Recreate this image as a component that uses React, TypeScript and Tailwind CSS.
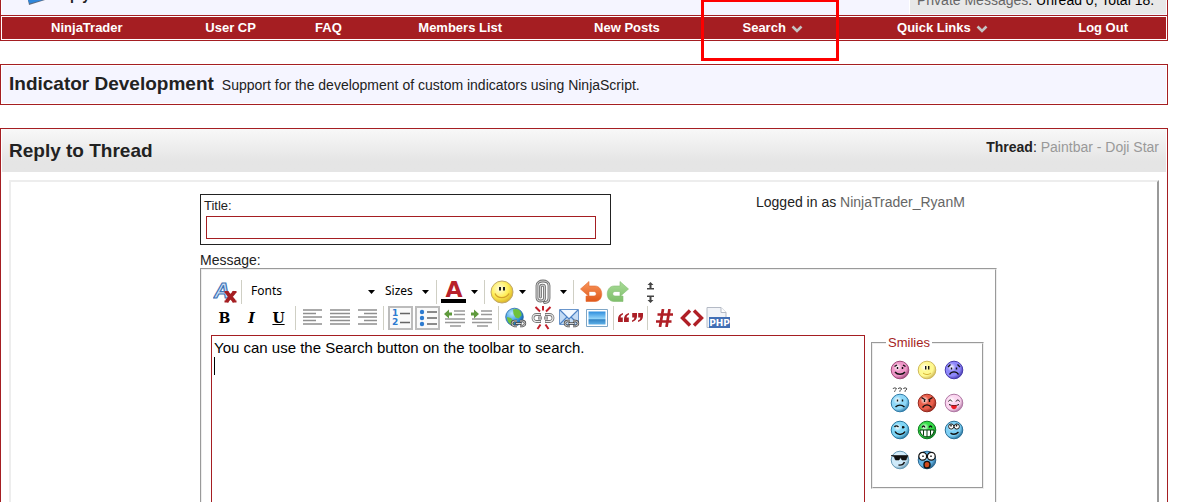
import type { ReactNode } from "react";

const NAV = [
  { label: "NinjaTrader" },
  { label: "User CP" },
  { label: "FAQ" },
  { label: "Members List" },
  { label: "New Posts" },
  { label: "Search", menu: true, marked: true },
  { label: "Quick Links", menu: true },
  { label: "Log Out" },
];

function Chevron() {
  return (
    <svg width="12" height="8" viewBox="0 0 12 8" className="mt-px" aria-hidden="true">
      <path d="M1.5 1.5 6 6l4.500-4.500" fill="none" stroke="#c4c4c4" strokeWidth="2.600" />
    </svg>
  );
}

function NavBar() {
  return (
    <nav className="shrink-0 border border-[#a51e22] p-px">
      <ul className="grid h-[22px] grid-cols-[170fr_118fr_78fr_186fr_148fr_144fr_196fr_126fr] bg-[#a51e22] text-[13px] font-bold text-white">
        {NAV.map((item) => (
          <li key={item.label} className="relative flex items-center justify-center pt-px">
            <a href="#" className="flex items-center gap-[5px]">
              {item.label}
              {item.menu && <Chevron />}
            </a>
            {item.marked && (
              <span className="pointer-events-none absolute -top-[17px] left-0 z-10 h-[61px] w-[138px] border-[3px] border-t-2 border-[#fe0000]" />
            )}
          </li>
        ))}
      </ul>
    </nav>
  );
}

function TopStrip() {
  return (
    <div className="h-[15px] shrink-0 border-x border-[#a51e22] bg-white px-px">
      <div className="flex h-full items-start justify-between overflow-hidden bg-[#f5f5ff]">
        <div className="flex h-full items-start pl-[26px]">
          <svg width="18" height="6" viewBox="0 0 18 6" aria-hidden="true">
            <path d="M0 0h17L1 5z" fill="#5d6b80" />
            <path d="M0 0h15L1.500 3.500z" fill="#2f87dc" />
          </svg>
          <div className="flex h-[3px] items-end pl-[6px] text-sm font-bold leading-4">Reply to Thread</div>
        </div>
        <div className="flex h-[14px] w-[257px] items-end border-l border-white bg-[#e8e8e8] px-[7px] pb-[6px] text-sm leading-4 text-black">
          <p>
            <a href="#" className="text-[#666]">Private Messages</a>: Unread 0, Total 18.
          </p>
        </div>
      </div>
    </div>
  );
}

type ToolProps = { label: string; children: ReactNode };

function Tool({ label, children }: ToolProps) {
  return (
    <button type="button" aria-label={label} className="flex h-[26px] w-[27px] shrink-0 items-center justify-center">
      {children}
    </button>
  );
}

function PressedTool({ label, children }: ToolProps) {
  return (
    <button
      type="button"
      aria-label={label}
      aria-pressed="true"
      className="mx-px flex h-6 w-[25px] shrink-0 items-center justify-center border-2 border-[#bcbcbc] bg-[#fafafa]"
    >
      {children}
    </button>
  );
}

function Caret() {
  return (
    <svg width="7" height="4" viewBox="0 0 7 4" aria-hidden="true">
      <path d="M0 0h7L3.500 4z" fill="#000" />
    </svg>
  );
}

function MenuArrow({ label }: { label: string }) {
  return (
    <button type="button" aria-label={label} className="flex h-[26px] w-[14px] shrink-0 items-center justify-center">
      <Caret />
    </button>
  );
}

function Separator() {
  return <span className="mx-[3px] h-6 w-px shrink-0 bg-[#cfcfc4]" />;
}

function Picker({ label, className }: { label: string; className: string }) {
  return (
    <div className={`relative shrink-0 ${className}`}>
      <select
        aria-label={label}
        className="h-[26px] w-full appearance-none bg-transparent pb-[2px] pl-[6px] font-['Noto_Sans',sans-serif] text-xs text-black"
      >
        <option>{label}</option>
      </select>
      <span className="pointer-events-none absolute inset-y-0 right-[4px] flex items-center">
        <Caret />
      </span>
    </div>
  );
}

function ClearIcon() {
  return (
    <svg width="24" height="24" viewBox="0 0 24 24" aria-hidden="true">
      <text x="1" y="18" fontFamily="Liberation Sans, sans-serif" fontSize="22" fontStyle="italic" fontWeight="bold" fill="#c9def5" stroke="#3f73b5" strokeWidth="1.200">A</text>
      <path d="m13.500 12 8 9.500m0-9.500-8 9.500" stroke="#a51e22" strokeWidth="3.600" />
      <path d="M11.500 12h4m4 0h4m-12 9.500h4m4 0h4" stroke="#a51e22" strokeWidth="2" />
    </svg>
  );
}

function ColorIcon() {
  return (
    <svg width="26" height="24" viewBox="0 0 26 24" aria-hidden="true">
      <text x="13" y="17" textAnchor="middle" fontFamily="DejaVu Sans, sans-serif" fontSize="22" fontWeight="bold" fill="#b8212b">A</text>
      <path d="M0 19h25v4H0z" fill="#000" />
    </svg>
  );
}

function SmileIcon() {
  return (
    <svg width="24" height="24" viewBox="0 0 24 24" aria-hidden="true">
      <radialGradient id="big-smile" cx="40%" cy="35%" r="65%">
        <stop offset="0" stopColor="#fffde0" />
        <stop offset=".6" stopColor="#ffee55" />
        <stop offset="1" stopColor="#dcb72a" />
      </radialGradient>
      <circle cx="12" cy="12" r="11" fill="url(#big-smile)" stroke="#c0a76a" />
      <path d="M10 7v3.500m4-3.500v3.500" stroke="#222" strokeWidth="2" />
      <path d="M5 13.500c2.500 5.500 11 5.500 14 0" fill="none" stroke="#d3a02c" strokeWidth="1.300" />
    </svg>
  );
}

function ClipIcon() {
  return (
    <svg width="18" height="26" viewBox="0 0 18 26" fill="none" aria-hidden="true">
      <g strokeLinecap="round">
        <path d="M6.500 18V8c0-2.500 4-2.500 4 0v11c0 4-7.500 4-7.500 0V6.500C3 .500 15 .500 15 6.500V19c0 3-2 4.500-4.500 4.500" stroke="#6a6a6a" strokeWidth="2.800" />
        <path d="M6.500 18V8c0-2.500 4-2.500 4 0v11c0 4-7.500 4-7.500 0V6.500C3 .500 15 .500 15 6.500V19c0 3-2 4.500-4.500 4.500" stroke="#cfcfcf" strokeWidth="1.200" />
      </g>
    </svg>
  );
}

const TURN = "M.500 8 9 .500v4.500H15c8.500 0 9.500 15.500 0 15.500H6v-5.500h8c3 0 3-4.500 0-4.500H9v5z";

function UndoIcon() {
  return (
    <svg width="23" height="22" viewBox="0 0 23 22" className="ml-[2px]" aria-hidden="true">
      <linearGradient id="undo" x2="0" y2="1">
        <stop offset="0" stopColor="#f9965c" />
        <stop offset="1" stopColor="#e0591b" />
      </linearGradient>
      <path d={TURN} fill="url(#undo)" stroke="#e4692f" strokeWidth=".6" />
    </svg>
  );
}

function RedoIcon() {
  return (
    <svg width="23" height="22" viewBox="0 0 23 22" aria-hidden="true">
      <linearGradient id="redo" x2="0" y2="1">
        <stop offset="0" stopColor="#a9dc98" />
        <stop offset="1" stopColor="#7fbf6b" />
      </linearGradient>
      <path d={TURN} transform="matrix(-1 0 0 1 23 0)" fill="url(#redo)" stroke="#84bd73" strokeWidth=".6" />
    </svg>
  );
}

function ResizeTools() {
  return (
    <div className="ml-[6px] flex h-[26px] w-[27px] shrink-0 flex-col">
      <button type="button" aria-label="Decrease size" className="flex h-[13px] items-center justify-center">
        <svg width="7" height="8" viewBox="0 0 7 8" aria-hidden="true">
          <path d="M3.500 0 6.500 3H4.500v3H7v1.500H0V6h2.500V3H.500z" fill="#444" />
        </svg>
      </button>
      <button type="button" aria-label="Increase size" className="flex h-[13px] items-center justify-center">
        <svg width="7" height="8" viewBox="0 0 7 8" aria-hidden="true">
          <path d="M3.500 8 .500 5h2V2H0V.500h7V2H4.500v3h2z" fill="#444" />
        </svg>
      </button>
    </div>
  );
}

function AlignIcon({ d }: { d: string }) {
  return (
    <svg width="20" height="18" viewBox="0 0 20 18" aria-hidden="true">
      <path d={d} stroke="#8f8f8f" strokeWidth="1.700" />
    </svg>
  );
}

function ListIcon({ ordered }: { ordered?: boolean }) {
  return (
    <svg width="20" height="20" viewBox="0 0 20 20" aria-hidden="true">
      <path d={ordered ? "M9 5.500h10M9 14.500h10" : "M9 4h10M9 10h10M9 16h10"} stroke="#666" strokeWidth="1.600" />
      {ordered ? (
        <g fontFamily="DejaVu Sans, sans-serif" fontSize="9" fontWeight="bold" fill="#2d7bd0">
          <text x="1" y="8">1</text>
          <text x="1" y="17">2</text>
        </g>
      ) : (
        <g fill="#2d7bd0">
          <circle cx="4" cy="4" r="2.200" />
          <circle cx="4" cy="10" r="2.200" />
          <circle cx="4" cy="16" r="2.200" />
        </g>
      )}
    </svg>
  );
}

function IndentIcon({ outdent }: { outdent?: boolean }) {
  return (
    <svg width="22" height="18" viewBox="0 0 22 18" aria-hidden="true">
      <path d="M10 2h11M10 5.500h11M1 10h20M1 13.500h20M6 17h11" stroke="#999" strokeWidth="1.600" />
      <path d={outdent ? "m0 5 5-4.500v3h3v3H5v3z" : "M8 5 3 .500v3H0v3h3v3z"} fill="#5f9a3d" />
    </svg>
  );
}

function Links() {
  return (
    <g fill="none">
      <path d="M7 1.500H4.500a2.500 2.500 0 0 0 0 5H7M10 1.500h2.500a2.500 2.500 0 0 1 0 5H10M5.500 4h6" stroke="#4c4c4c" strokeWidth="2.400" />
      <path d="M7 1.500H4.500a2.500 2.500 0 0 0 0 5H7M10 1.500h2.500a2.500 2.500 0 0 1 0 5H10M6 4h5" stroke="#dedede" strokeWidth=".9" />
    </g>
  );
}

function LinkIcon() {
  return (
    <svg width="22" height="22" viewBox="0 0 22 22" aria-hidden="true">
      <radialGradient id="globe" cx="35%" cy="30%" r="75%">
        <stop offset="0" stopColor="#b8e6ff" />
        <stop offset=".6" stopColor="#3a9ae0" />
        <stop offset="1" stopColor="#0d5ba8" />
      </radialGradient>
      <circle cx="9.500" cy="10" r="8.800" fill="url(#globe)" stroke="#2668a8" strokeWidth=".8" />
      <path d="M8 2.500c5-2 9 2 8.500 6l-3 3-3-1-2-3.500zM2 10l4 1 3 4-1 3.500C4 17.500 2 14 2 10z" fill="#6fc23c" />
      <g transform="translate(5 12.500)"><Links /></g>
    </svg>
  );
}

function UnlinkIcon() {
  return (
    <svg width="24" height="24" viewBox="0 0 24 24" aria-hidden="true">
      <g fill="none">
        <path d="M10 8.500H5.500a3.500 3.500 0 0 0 0 7H10M14 8.500h4.500a3.500 3.500 0 0 1 0 7H14M7 12h4m2 0h4" stroke="#777" strokeWidth="2.800" />
        <path d="M9.500 8.500h-4a3.500 3.500 0 0 0 0 7h4M14.500 8.500h4a3.500 3.500 0 0 1 0 7h-4M7.500 12h3m3 0h3" stroke="#ececec" strokeWidth="1.200" />
        <path d="m4.500 1 4.500 4.500M12 0v4.500M19.500 1 15 5.500M6.500 23 9.500 18.500M17.500 23l-3-4.500" stroke="#c3202b" strokeWidth="2" />
      </g>
    </svg>
  );
}

function MailIcon() {
  return (
    <svg width="21" height="20" viewBox="0 0 21 20" aria-hidden="true">
      <path d="M.500 1.500h19v15H.500z" fill="#c4dcf5" stroke="#6a96cc" />
      <path d="m1 16 7-7m11 7-7-7M1 2l9 9 9-9" fill="#f3f9ff" stroke="#4d82c4" strokeWidth="1.200" />
      <g transform="translate(4 11.500)"><Links /></g>
    </svg>
  );
}

function ImageIcon() {
  return (
    <svg width="22" height="18" viewBox="0 0 22 18" aria-hidden="true">
      <linearGradient id="photo" x2="0" y2="1">
        <stop offset="0" stopColor="#2d8ddd" />
        <stop offset=".6" stopColor="#9ad9fa" />
        <stop offset=".62" stopColor="#3283c4" />
        <stop offset="1" stopColor="#5fb1e8" />
      </linearGradient>
      <path d="M.500.500h21v17H.500z" fill="#fff" stroke="#7fa6c6" />
      <path d="M2.500 2.500h17v13h-17z" fill="url(#photo)" />
    </svg>
  );
}

function QuoteIcon() {
  const mark = "M5 0C1.500 1 0 3 0 6v3h4.800V4.500H2.600C2.700 3 3.500 2 5 1.500z";
  return (
    <svg width="25" height="10" viewBox="0 0 25 10" fill="#ab1f26" aria-hidden="true">
      <path d={mark} />
      <path d={mark} transform="translate(6 0)" />
      <path d={mark} transform="rotate(180 9.500 4.500)" />
      <path d={mark} transform="rotate(180 12.500 4.500)" />
    </svg>
  );
}

function HashIcon() {
  return (
    <svg width="17" height="18" viewBox="0 0 17 18" aria-hidden="true">
      <path d="M7 0 4 18M13.500 0l-3 18M1.500 5.500H17M0 12.500h15.500" stroke="#b01f26" strokeWidth="2.700" />
    </svg>
  );
}

function CodeIcon() {
  return (
    <svg width="24" height="18" viewBox="0 0 24 18" fill="none" aria-hidden="true">
      <path d="m10 1.500-7.500 7.500 7.500 7.500M14 1.500 21.500 9 14 16.500" stroke="#b01f26" strokeWidth="3.400" />
    </svg>
  );
}

function PhpIcon() {
  return (
    <svg width="25" height="24" viewBox="0 0 25 24" aria-hidden="true">
      <path d="M1 1.500h14l5 5v15H1z" fill="#f2f4f8" stroke="#b4bac5" />
      <path d="M15 1.500v5h5" fill="#fff" stroke="#b4bac5" />
      <path d="M3 11h21v11H3z" fill="#426fb5" />
      <text x="13.500" y="20" textAnchor="middle" fontFamily="DejaVu Sans, sans-serif" fontSize="9" fontWeight="bold" fill="#fff">PHP</text>
    </svg>
  );
}

const ALIGN_LEFT = "M0 1h19M0 4.500h13M0 8h19M0 11.500h13M0 15h19";
const ALIGN_CENTER = "M0 1h20M0 4.500h20M0 8h20M0 11.500h20M0 15h20";
const ALIGN_RIGHT = "M1 1h19M7 4.500h13M1 8h19M7 11.500h13M1 15h19";

function Toolbar() {
  return (
    <div role="toolbar" aria-label="Formatting">
      <div className="flex h-[26px] items-center">
        <Tool label="Remove formatting"><ClearIcon /></Tool>
        <Separator />
        <Picker label="Fonts" className="w-[134px]" />
        <Picker label="Sizes" className="w-[54px]" />
        <Separator />
        <Tool label="Text color"><ColorIcon /></Tool>
        <MenuArrow label="Choose color" />
        <Separator />
        <Tool label="Insert smilie"><SmileIcon /></Tool>
        <MenuArrow label="Choose smilie" />
        <Tool label="Attachments"><ClipIcon /></Tool>
        <MenuArrow label="Choose attachment" />
        <Separator />
        <Tool label="Undo"><UndoIcon /></Tool>
        <Tool label="Redo"><RedoIcon /></Tool>
        <ResizeTools />
      </div>
      <div className="flex h-[26px] items-center font-['DejaVu_Serif',serif] text-sm font-bold text-black">
        <Tool label="Bold">B</Tool>
        <Tool label="Italic"><i>I</i></Tool>
        <Tool label="Underline"><u>U</u></Tool>
        <Separator />
        <Tool label="Align left"><AlignIcon d={ALIGN_LEFT} /></Tool>
        <Tool label="Align center"><AlignIcon d={ALIGN_CENTER} /></Tool>
        <Tool label="Align right"><AlignIcon d={ALIGN_RIGHT} /></Tool>
        <Separator />
        <PressedTool label="Ordered list"><ListIcon ordered /></PressedTool>
        <PressedTool label="Unordered list"><ListIcon /></PressedTool>
        <Tool label="Decrease indent"><IndentIcon outdent /></Tool>
        <Tool label="Increase indent"><IndentIcon /></Tool>
        <Separator />
        <Tool label="Insert link"><LinkIcon /></Tool>
        <Tool label="Remove link"><UnlinkIcon /></Tool>
        <Tool label="Insert email link"><MailIcon /></Tool>
        <Tool label="Insert image"><ImageIcon /></Tool>
        <Separator />
        <Tool label="Quote"><QuoteIcon /></Tool>
        <Separator />
        <Tool label="Code"><HashIcon /></Tool>
        <Tool label="HTML"><CodeIcon /></Tool>
        <Tool label="PHP"><PhpIcon /></Tool>
      </div>
    </div>
  );
}

type Smilie = { name: string; light: string; dark: string; tall?: boolean; face: ReactNode };

// Faces are drawn on an 18px disc centred on 9,9.
const SMILIES: Smilie[] = [
  {
    name: "embarrassed", light: "#ef97c8", dark: "#a0487a",
    face: <path d="M3.500 5.500 6 4m6 0 2.500 1.500M6.500 6v2m5-2v2M4 11c2.500 3 7.500 3 10 0" />,
  },
  {
    name: "smile", light: "#fff990", dark: "#d0b95a",
    face: (
      <>
        <path d="M7.700 5v3.500m3-3.500v3.500" />
        <path d="M5 12c2.500 2 5.500 2 8 0" stroke="#d9b436" strokeWidth="1" />
      </>
    ),
  },
  {
    name: "frown", light: "#8f88fb", dark: "#463aae",
    face: <path d="m3 6 2.500-2.500M15 6l-2.500-2.500M6.500 6.500v2m5-2v2M4.500 13.500c2-3.500 7-3.500 9 0" />,
  },
  {
    name: "confused", light: "#8fd8f8", dark: "#2f7ba8", tall: true,
    face: (
      <>
        <path d="M6.500 5.500v2m5-2v2M4.500 13c2.500-2.500 6.500-2.500 9 0" />
        <path d="M2-5c0-1.500 3.500-1.500 3.500 0L3.700-3.200v1M7.200-5c0-1.500 3.500-1.500 3.500 0L8.900-3.200v1M12.400-5c0-1.500 3.500-1.500 3.500 0l-1.800 1.800v1" stroke="#444" strokeWidth="1" />
      </>
    ),
  },
  {
    name: "mad", light: "#ea5f4b", dark: "#97291f", tall: true,
    face: <path d="m3.500 3.500 4 2.500m7-2.500-4 2.500M6.500 6v2m5-2v2M4.500 13.500c2.500-3.500 6.500-3.500 9 0" />,
  },
  {
    name: "tongue", light: "#fbd6f0", dark: "#b078a4", tall: true,
    face: (
      <>
        <path d="M3.500 7.500c1-2 2.500-2 3.500 0m4 0c1-2 2.500-2 3.500 0M4 10.500c2.500 1.500 7.500 1.500 10 0" strokeWidth="1" />
        <path d="M6 11.500h6c0 5-6 5-6 0z" fill="#ec1c24" stroke="none" />
      </>
    ),
  },
  {
    name: "wink", light: "#7fd6f6", dark: "#26769f",
    face: <path d="M3.500 6c1-1.500 2.500-1.500 4 0M12 5v2.500M11 6.200h2.500M4 10.500c2.500 4 7.500 4 10 0" />,
  },
  {
    name: "grin", light: "#35df48", dark: "#107a23",
    face: (
      <>
        <path d="M4 6.500C5 4.500 6 4.500 7 6.500m4 0c1-2 2-2 3 0" />
        <path d="M2 9h14c0 9-14 9-14 0zM5.500 9v5.500M9 9v6.500m3.500-6.500v5.500" fill="#fff" stroke="#063d0e" strokeWidth="1" />
      </>
    ),
  },
  {
    name: "rolleyes", light: "#7fd0f5", dark: "#286f98",
    face: (
      <>
        <circle cx="6.200" cy="5.500" r="2.600" fill="#fff" strokeWidth=".9" />
        <circle cx="11.800" cy="5.500" r="2.600" fill="#fff" strokeWidth=".9" />
        <path d="M6 3.500v2m5.500-2v2M5.500 12c2.500 2 5.500 1.500 8-1" />
      </>
    ),
  },
  {
    name: "cool", light: "#cfeafa", dark: "#6699b5",
    face: (
      <>
        <path d="M0 4.500h17L15 9h-4L9.500 6.500 8 9H4.500L3 5.500z" fill="#111" strokeWidth=".6" />
        <path d="M7.500 14c3 .500 5-.500 6-3" />
      </>
    ),
  },
  {
    name: "eek", light: "#62b4e6", dark: "#2a668f",
    face: (
      <>
        <circle cx="4.700" cy="5.300" r="3.900" fill="#fff" strokeWidth="1.200" />
        <circle cx="13.300" cy="5.300" r="3.900" fill="#fff" strokeWidth="1.200" />
        <path d="M5 4.500v1.500m8-1.500v1.500" />
        <ellipse cx="9" cy="13.700" rx="3" ry="3.300" fill="#d04a1d" />
      </>
    ),
  },
];

function SmilieButton({ name, light, dark, tall, face }: Smilie) {
  return (
    <button type="button" aria-label={name} className="flex items-center justify-center">
      <svg width="20" height={tall ? 26 : 20} viewBox={tall ? "-1 -7 20 26" : "-1 -1 20 20"} aria-hidden="true">
        <radialGradient id={`smilie-${name}`} cx="36%" cy="34%" r="70%">
          <stop offset="0" stopColor="#fff" />
          <stop offset=".35" stopColor={light} />
          <stop offset=".7" stopColor={light} />
          <stop offset="1" stopColor={dark} />
        </radialGradient>
        <circle cx="9" cy="9" r="8.800" fill={`url(#smilie-${name})`} stroke={dark} />
        <g fill="none" stroke="#111" strokeWidth="1.400">{face}</g>
      </svg>
    </button>
  );
}

function Smilies() {
  return (
    <fieldset className="w-[113px] shrink-0 self-start border-2 border-[#eee] pb-3 pl-[13px] pt-1 [border-style:groove]">
      <legend className="px-[2px] text-[13px] leading-4 text-[#a51e22]">Smilies</legend>
      <div className="grid w-[81px] auto-rows-[30px] grid-cols-3">
        {SMILIES.map((s) => (
          <SmilieButton key={s.name} {...s} />
        ))}
      </div>
    </fieldset>
  );
}

function Editor() {
  return (
    <div className="flex w-[797px] grow flex-col border-2 border-[#eee] pb-3 pl-[9px] pr-[11px] pt-[9px] [border-style:groove]">
      <Toolbar />
      <div className="mt-1 flex grow gap-[6px]">
        <div className="relative flex grow">
          <textarea
            id="message"
            className="min-h-[250px] grow resize-none border border-[#a51e22] px-[2px] pt-[2px] text-[15px] leading-[19px] text-black outline-none"
            defaultValue={"You can use the Search button on the toolbar to search.\n"}
          />
          <span className="pointer-events-none absolute left-[3px] top-[22px] h-[18px] w-px bg-black" />
        </div>
        <Smilies />
      </div>
    </div>
  );
}

export default function App() {
  return (
    <div className="flex h-screen flex-col overflow-hidden bg-white pr-[26px] font-['Liberation_Sans',Arial,sans-serif] text-sm text-[#222]">
      <TopStrip />
      <NavBar />

      <section className="mt-[23px] shrink-0 border border-[#a51e22] p-px">
        <div className="flex items-baseline gap-2 bg-[#f5f5ff] px-[7px] pb-[5px] pt-1">
          <h1 className="text-[19px] font-bold leading-7">Indicator Development</h1>
          <p>Support for the development of custom indicators using NinjaScript.</p>
        </div>
      </section>

      <section className="mt-[23px] flex shrink-0 grow flex-col border border-b-0 border-[#a51e22]">
        <header className="mx-px flex h-[43px] shrink-0 justify-between bg-linear-to-b from-[#f8f8f8] to-[#e5e5e5] to-75% px-[7px]">
          <h2 className="self-center text-[19px] font-bold">Reply to Thread</h2>
          <p className="pt-2">
            <b>Thread</b>: <a href="#" className="text-[#999]">Paintbar - Doji Star</a>
          </p>
        </header>

        <form className="mx-2 mt-2 flex grow flex-col border-2 border-b-0 border-[#ededed] border-r-[#999] pt-3">
          <div className="mx-auto flex w-[768px] grow flex-col">
            <div className="flex items-start justify-between">
              <div className="w-[411px] border border-[#222] px-[3px] pb-[5px] pt-[3px]">
                <label htmlFor="title" className="block text-[13px] leading-4">Title:</label>
                <input
                  id="title"
                  type="text"
                  className="ml-[2px] mt-[2px] block h-[23px] w-[390px] border border-[#a51e22] px-1 text-[13px] outline-none"
                />
              </div>
              <p className="w-[212px] leading-4">
                Logged in as <a href="#" className="text-[#666]">NinjaTrader_RyanM</a>
              </p>
            </div>
            <label htmlFor="message" className="mt-[7px] block leading-4">Message:</label>
            <Editor />
          </div>
        </form>
      </section>
    </div>
  );
}
